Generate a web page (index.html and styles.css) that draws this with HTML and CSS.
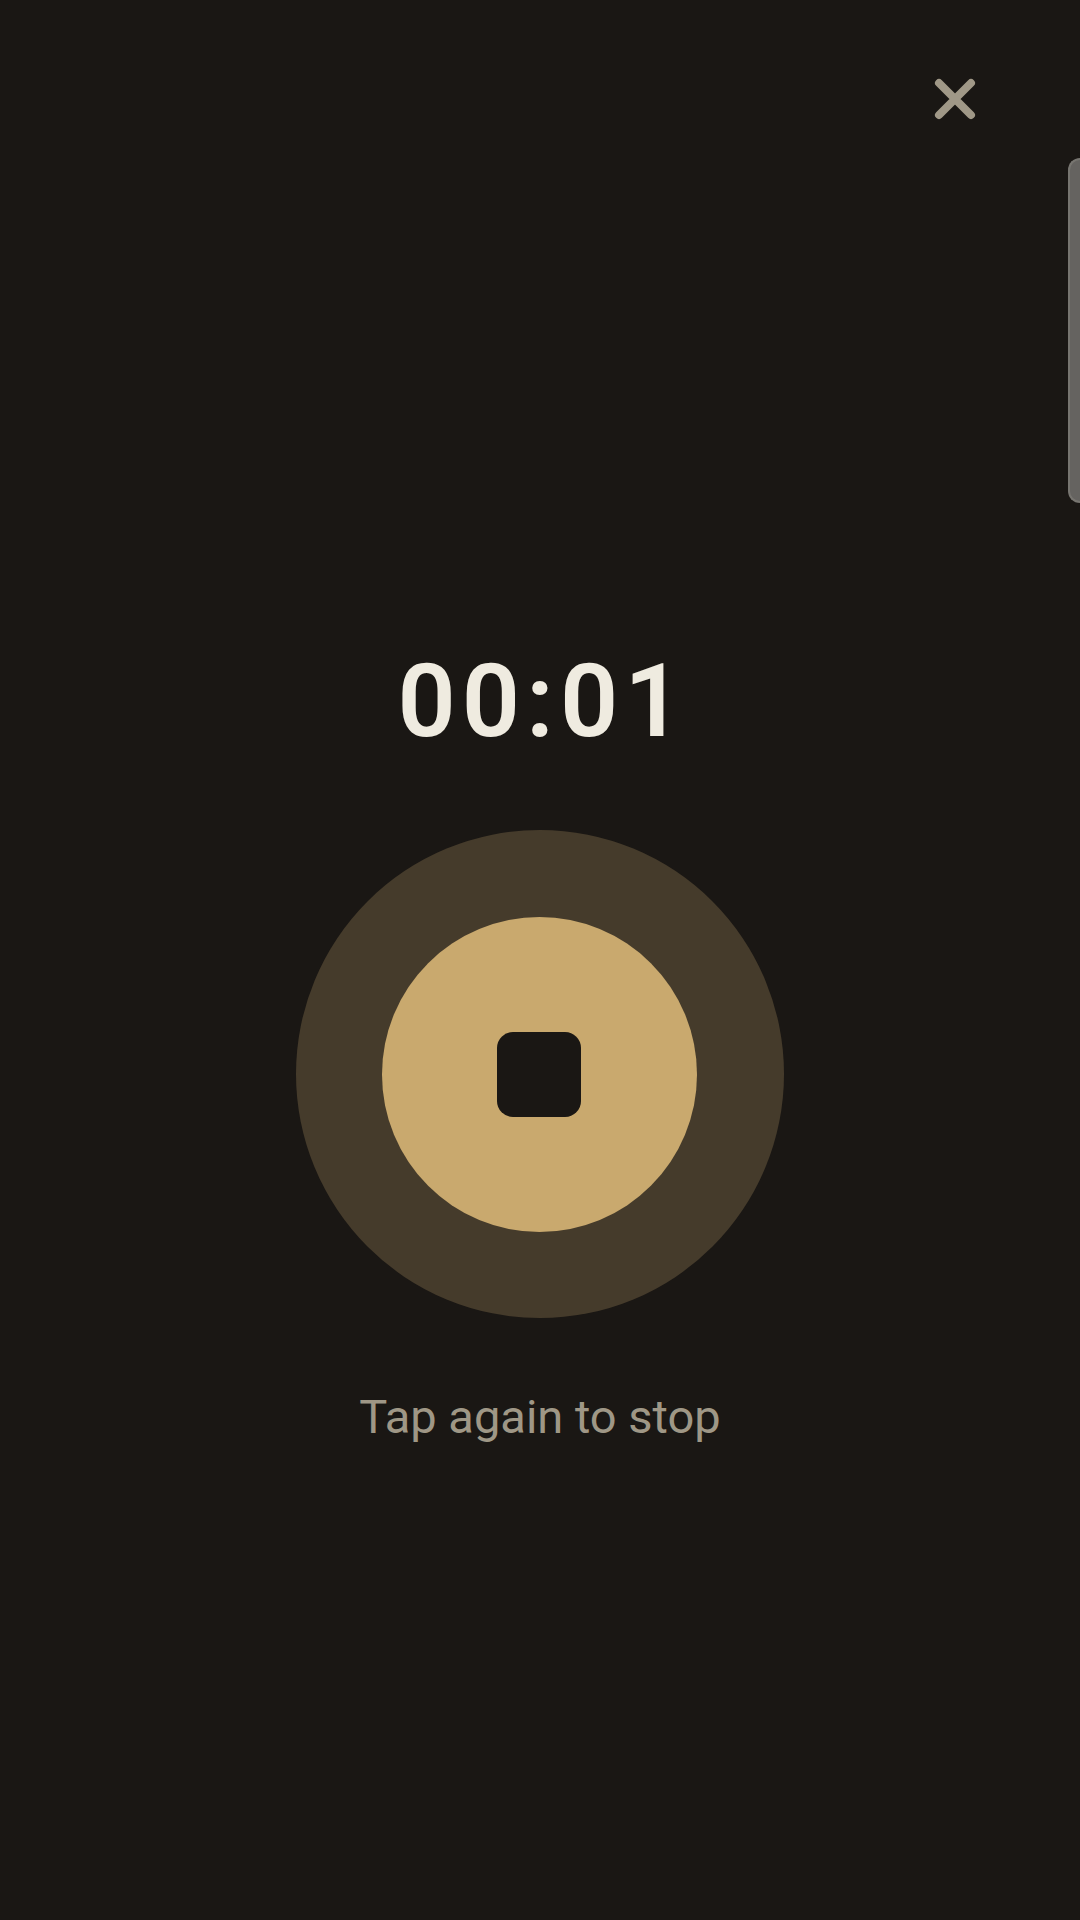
FILE: index.html
```html
<!DOCTYPE html>
<html lang="en">
<head>
<meta charset="utf-8">
<title>Recording</title>
<link rel="stylesheet" href="styles.css">
</head>
<body>
<main class="screen">
  <button class="close" aria-label="Close">
    <svg viewBox="0 0 48 48" width="48" height="48"><path d="M8 8 L40 40 M40 8 L8 40" fill="none" stroke="#a09887" stroke-width="8" stroke-linecap="round"/></svg>
  </button>
  <div class="edge-handle"></div>
  <section class="recorder">
    <div class="timer">00:01</div>
    <div class="halo">
      <button class="record" aria-label="Stop"><span class="stop"></span></button>
    </div>
    <p class="hint">Tap again to stop</p>
  </section>
</main>
</body>
</html>
```
FILE: styles.css
```css
* { box-sizing: border-box; }
html, body { margin: 0; padding: 0; height: 100%; }
body { background: #1a1714; font-family: Roboto, "Noto Sans", sans-serif; overflow: hidden; }
.screen { position: relative; width: 1080px; height: 1920px; display: flex; justify-content: center; align-items: center; }
.close { position: absolute; top: 75px; left: 931px; width: 48px; height: 48px; padding: 0; border: 0; background: none; display: block; }
.close svg { display: block; }
.edge-handle { position: absolute; top: 158px; right: 0; width: 12px; height: 345px; background: #656360; border: 2px solid #777570; border-right: 0; border-radius: 12px 0 0 12px; }
.recorder { display: flex; flex-direction: column; align-items: center; padding-top: 168px; }
.timer { font-size: 102px; line-height: 116px; font-weight: 600; letter-spacing: 6px; margin-left: 6px; color: #efebe0; font-variant-numeric: tabular-nums; }
.halo { width: 488px; height: 488px; margin-top: 71px; border-radius: 50%; background: rgba(201, 169, 110, 0.25); display: flex; align-items: center; justify-content: center; }
.record { width: 315px; height: 315px; margin-right: 1px; padding: 0; border: 0; border-radius: 50%; background: #c9a96e; display: flex; align-items: center; justify-content: center; }
.stop { width: 84px; height: 85px; margin-right: 1px; border-radius: 16px; background: #1a1714; display: block; }
.hint { margin: 71px 0 0; font-size: 47px; line-height: 56px; color: #9f9786; }
```
